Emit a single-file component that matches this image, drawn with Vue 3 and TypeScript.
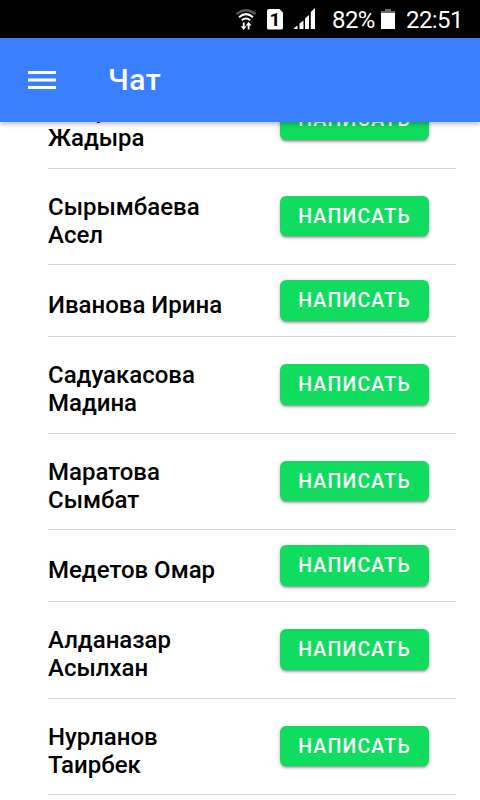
<script setup lang="ts">
interface Contact {
  name: string[]
  size: 'tall' | 'taller' | 'short'
}

const contacts: Contact[] = [
  { name: ['Омарова', 'Жадыра'], size: 'taller' },
  { name: ['Сырымбаева', 'Асел'], size: 'tall' },
  { name: ['Иванова Ирина'], size: 'short' },
  { name: ['Садуакасова', 'Мадина'], size: 'taller' },
  { name: ['Маратова', 'Сымбат'], size: 'tall' },
  { name: ['Медетов Омар'], size: 'short' },
  { name: ['Алданазар', 'Асылхан'], size: 'taller' },
  { name: ['Нурланов', 'Таирбек'], size: 'tall' },
]
</script>

<template>
  <div class="screen">
    <div class="status">
      <svg class="wifi" width="22" height="24" viewBox="0 0 22 24" fill="none">
        <path d="M1.5 6.2Q11 -1.8 20.5 6.2" stroke="#555" stroke-width="2.3" />
        <path d="M4 9.2Q11 3.2 18 9.2M6.8 12.2Q11 8.8 15.2 12.2" stroke="#fff" stroke-width="2.1" />
        <path d="M8.7 14.5v5M13.6 21.5v-5" stroke="#fff" stroke-width="1.8" />
        <path d="M5.8 18.2h5.8L8.7 22zM10.7 17.5h5.8L13.6 13.7z" fill="#fff" />
      </svg>
      <span class="sim">1</span>
      <svg class="signal" width="22" height="22" viewBox="0 0 22 22" fill="#fff">
        <path d="M0 21v-1l3.5-2.5V21zM5.5 21v-5.5l4-3V21zM11 21V10.500l4-3.500V21zM16.800 21V4L21 0v21z" />
      </svg>
      <span class="percent">82%</span>
      <svg class="battery" width="14" height="22" viewBox="0 0 14 22">
        <path d="M4 1h6v2h4v3H0V3h4z" fill="#666" />
        <path d="M0 5h14v16H0z" fill="#fff" />
      </svg>
      <span class="clock">22:51</span>
    </div>

    <header class="toolbar">
      <svg width="28" height="20" viewBox="0 0 28 20" fill="#fff">
        <path d="M0 1h28v3H0zM0 8.5h28v3H0zM0 16h28v3H0z" />
      </svg>
      <h1>Чат</h1>
    </header>

    <main class="viewport">
      <ul class="list">
        <li v-for="(contact, i) in contacts" :key="i" :class="['row', contact.size]">
          <div class="name">
            <div v-for="part in contact.name" :key="part">{{ part }}</div>
          </div>
          <button type="button">НАПИСАТЬ</button>
        </li>
      </ul>
    </main>
  </div>
</template>

<style>
body {
  margin: 0;
  overflow: hidden;
}
</style>

<style scoped>
.screen {
  width: 480px;
  height: 800px;
  display: flex;
  flex-direction: column;
  overflow: hidden;
  background: #fff;
  font-family: Roboto, "Noto Sans", sans-serif;
}
.status {
  flex: 0 0 38px;
  display: flex;
  align-items: center;
  background: #000;
  color: #fff;
  padding-left: 235px;
}
.wifi {
  margin-top: 1px;
}
.sim {
  width: 16px;
  height: 21px;
  margin-left: 10px;
  background: #fff;
  color: #000;
  border-radius: 2px;
  clip-path: polygon(0 0, 12px 0, 100% 4px, 100% 100%, 0 100%);
  font-size: 19px;
  font-weight: 700;
  line-height: 22px;
  text-align: center;
}
.signal {
  margin-left: 11px;
}
.percent {
  margin: 2px 0 0 16px;
  width: 44px;
  font-size: 24px;
  letter-spacing: -0.6px;
  white-space: nowrap;
}
.battery {
  margin-left: 5px;
}
.clock {
  margin: 2px 0 0 11px;
  font-size: 24px;
  letter-spacing: -0.6px;
}
.toolbar {
  position: relative;
  z-index: 1;
  flex: 0 0 84px;
  box-sizing: border-box;
  display: flex;
  align-items: center;
  padding-left: 28px;
  background: #3880ff;
  color: #fff;
  box-shadow: 0 2px 5px rgba(0, 0, 0, 0.28);
}
h1 {
  margin: 0 0 0 52px;
  font-size: 30px;
  line-height: 36px;
  font-weight: 500;
  letter-spacing: 0.5px;
}
.viewport {
  flex: 1;
  min-height: 0;
  overflow: hidden;
}
.list {
  list-style: none;
  margin: -50px 0 0;
  padding: 0 24px 0 48px;
}
.row {
  box-sizing: border-box;
  display: grid;
  grid-template-columns: 232px 149px;
  align-items: start;
  border-bottom: 1px solid #d8d8d8;
  padding-top: 27px;
}
.tall {
  height: 96px;
}
.taller {
  height: 97px;
}
.short {
  height: 72px;
  padding-top: 15px;
}
.name {
  color: #000;
  font-size: 24px;
  line-height: 28px;
  font-weight: 500;
  margin-top: -3px;
}
.short .name {
  margin-top: 11px;
}
button {
  height: 41px;
  border: 0;
  padding: 0;
  border-radius: 6px;
  background: #10dc60;
  color: #fff;
  font-family: inherit;
  font-size: 19.5px;
  line-height: 41px;
  font-weight: 500;
  letter-spacing: 1.17px;
  box-shadow: 0 3px 2px -2px rgba(0, 0, 0, 0.25), 0 2px 3px rgba(0, 0, 0, 0.2), 0 1px 5px rgba(0, 0, 0, 0.12);
}
.tall button {
  height: 40px;
}
</style>
